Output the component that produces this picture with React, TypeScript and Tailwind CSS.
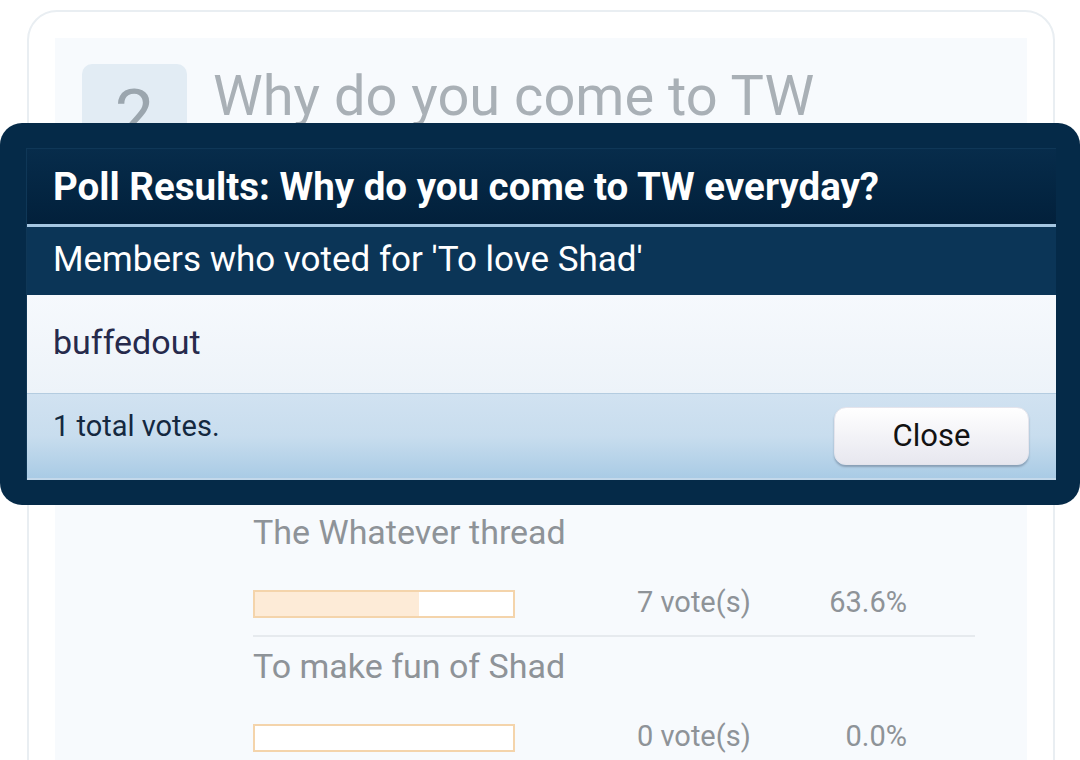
const options = [
  { label: "The Whatever thread", votes: 7, pct: 63.6 },
  { label: "To make fun of Shad", votes: 0, pct: 0 },
];

function OptionRow({ label, votes, pct, last }: { label: string; votes: number; pct: number; last?: boolean }) {
  return (
    <div className="w-[722px]">
      <div className="text-[34px] leading-[40px] text-[#8e9398]">{label}</div>
      <div className="mt-[38px] flex items-center h-[28px]">
        <div className="w-[262px] h-[28px] border-2 border-[#f4d4ab] bg-white">
          <div className="h-full bg-[#fdebd7]" style={{ width: `${pct}%` }} />
        </div>
        <span className="ml-[122px] w-[130px] text-[29px] leading-[34px] text-[#8e9398] -mt-[4px]">{votes} vote(s)</span>
        <span className="w-[140px] text-right text-[29px] leading-[34px] text-[#8e9398] -mt-[4px]">{pct.toFixed(1)}%</span>
      </div>
      {!last && <div className="mt-[17px] mb-[9px] h-[2px] bg-[#e6eaee]" />}
    </div>
  );
}

export default function App() {
  return (
    <div className="relative w-[1080px] h-[760px] overflow-hidden bg-white font-['Roboto',sans-serif]">
      {/* Background poll card */}
      <div className="ml-[27px] mt-[10px] w-[1028px] h-[800px] rounded-[30px] border-2 border-[#e9eef2] px-[26px] pt-[26px]">
        <div className="h-full bg-[#f7fafd] pl-[27px] pt-[26px]">
          <div className="flex items-start gap-[26px]">
            <div className="w-[105px] h-[104px] shrink-0 rounded-[10px] bg-[#e2ecf4] flex justify-center pt-[16px] text-[70px] leading-none text-[#9ba6ae]">
              2
            </div>
            <div className="text-[56px] leading-[64px] text-[#a9b0b6]">Why do you come to TW everyday?</div>
          </div>
          <div className="ml-[171px] mt-[320px]">
            {options.map((o, i) => (
              <OptionRow key={o.label} {...o} last={i === options.length - 1} />
            ))}
          </div>
        </div>
      </div>

      {/* Modal */}
      <div className="absolute left-0 top-[123px] w-[1080px] h-[382px] rounded-[22px] bg-[#052a48] pl-[26px] pr-[24px] pt-[25px]">
        <div className="flex flex-col border-t border-l border-[#0f3757]">
          <div className="h-[75px] flex items-center px-[26px] bg-gradient-to-b from-[#072c4b] to-[#02203b]">
            <h2 className="text-[38.5px] leading-[44px] font-bold text-white">Poll Results: Why do you come to TW everyday?</h2>
          </div>
          <div className="h-[3px] bg-[#a5c6e1]" />
          <div className="h-[68px] flex items-center px-[26px] bg-[#0b3557]">
            <span className="text-[35px] leading-[40px] text-white -mt-[2px]">Members who voted for 'To love Shad'</span>
          </div>
          <div className="h-[98px] flex items-center px-[26px] bg-gradient-to-b from-[#f6f9fd] to-[#edf3f9]">
            <span className="text-[34px] leading-[40px] text-[#262a4c] -mt-[4px]">buffedout</span>
          </div>
          <div className="h-[85px] flex items-center justify-between pl-[26px] pr-[27px] border-t border-[#b4cce0] bg-gradient-to-b from-[#d1e2f1] via-[#c8ddee] to-[#a9cbe5]">
            <span className="self-start pt-[15px] text-[29px] leading-[34px] text-[#14283f]">1 total votes.</span>
            <button
              type="button"
              className="w-[195px] h-[58px] rounded-[12px] bg-gradient-to-b from-white to-[#e7e7ef] border border-[#e4e4ec] shadow-[0_2px_2px_rgba(60,70,90,0.35)] text-[31px] leading-[36px] text-[#121212]"
            >
              Close
            </button>
          </div>
          <div className="h-[2px] bg-[#c3d8ea]" />
        </div>
      </div>
    </div>
  );
}
